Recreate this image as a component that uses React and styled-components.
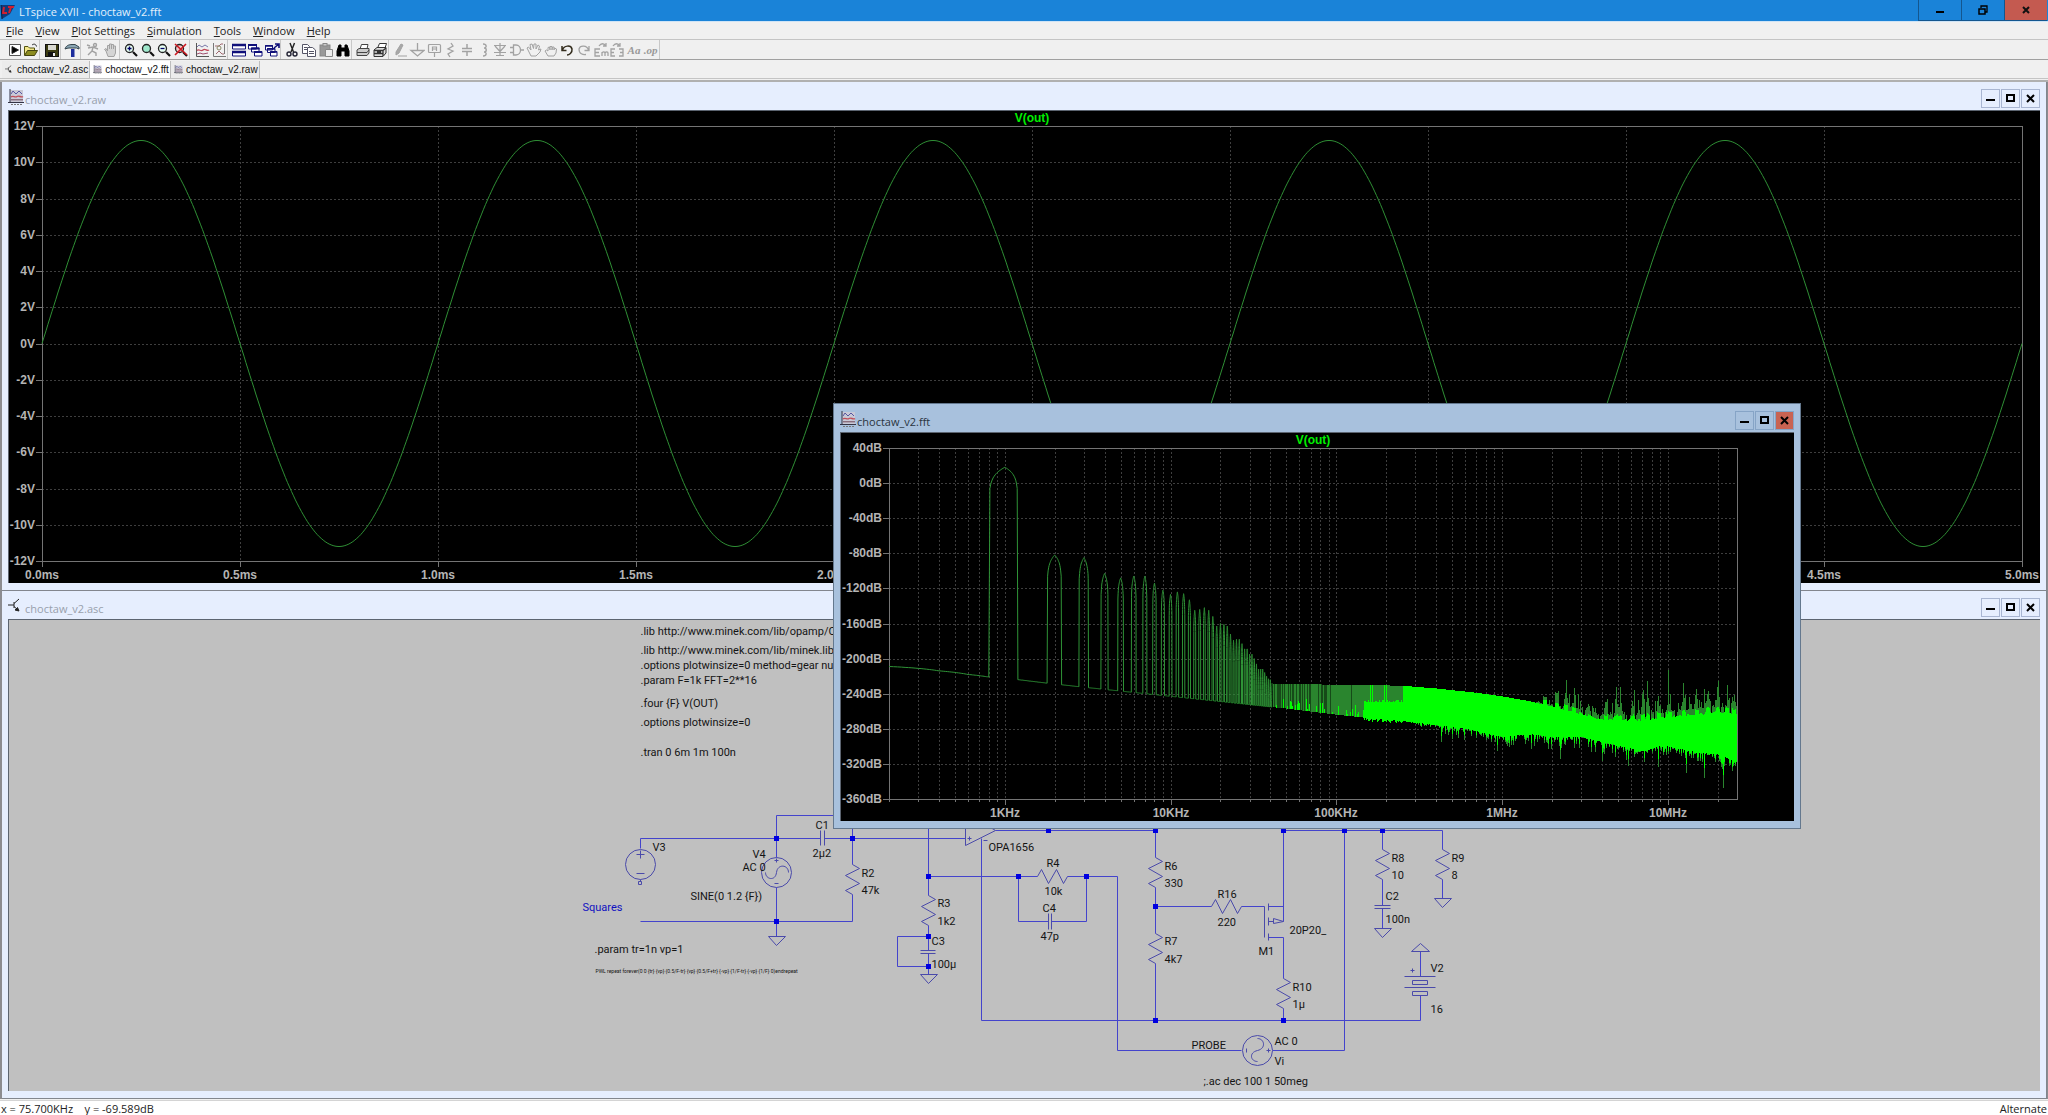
import { useLayoutEffect, useMemo, useRef, useState } from "react";
import styled, { createGlobalStyle } from "styled-components";

const GlobalStyle = createGlobalStyle`
    * {
        box-sizing: border-box;
    }
    body {
        margin: 0;
        overflow: hidden;
        background-color: #f0f0f0;
        font-family: "Open Sans", "Noto Sans", sans-serif;
        font-size: 11px;
        color: #222222;
    }
    button {
        padding: 0;
        border: none;
        background: none;
        font: inherit;
        color: inherit;
    }
`

/* ---------- application frame ---------- */

const Page = styled.div`
    display: flex;
    flex-direction: column;
    height: 100vh;
`

const TitleBar = styled.header`
    display: flex;
    align-items: center;
    height: 21px;
    padding-right: 1px;
    background-color: #1a83d8;
    color: #e4f1fc;
    flex: none;
`

const AppTitle = styled.h1`
    flex: 1;
    margin: 0;
    padding: 3px 0 0 3px;
    font-size: 11px;
    line-height: 18px;
    font-weight: normal;
`

const AppButton = styled.button`
    display: flex;
    align-items: center;
    justify-content: center;
    align-self: stretch;
    width: 43px;
    border-left: 1px solid #14568e;
    border-bottom: 1px solid #14568e;
    background-color: ${props => (props.$close ? "#c45a50" : "transparent")};
`

const MenuBar = styled.nav`
    display: flex;
    gap: 12px;
    height: 19px;
    padding-left: 6px;
    border-top: 1px solid #cfe4f6;
    border-bottom: 1px solid #c4c4c4;
    flex: none;
`

const MenuItem = styled.button`
    line-height: 18px;
    font-size: 11px;
`

const ToolBar = styled.div`
    display: flex;
    height: 20px;
    padding-left: 4px;
    border-bottom: 1px solid #a0a0a0;
    flex: none;
`

const ToolGroup = styled.div`
    display: flex;
    align-items: center;
    justify-content: space-around;
    width: ${props => props.$width}px;
    padding-left: 3px;
    border-right: 1px solid #c8c8c8;
`

const ToolButton = styled.button`
    display: flex;
    width: 16px;
    height: 16px;
    overflow: hidden;
`

const TabStrip = styled.div`
    display: flex;
    height: 19px;
    padding: 1px 0 0 2px;
    border-bottom: 1px solid #c4c4c4;
    flex: none;
`

const Tab = styled.button`
    display: flex;
    align-items: center;
    gap: 3px;
    padding: 0 1px 0 3px;
    font-family: "Liberation Sans", Arial, sans-serif;
    font-size: 10px;
    color: #111111;
    border-right: 1px solid #bdbdbd;
    background-color: ${props => (props.$active ? "#ffffff" : "#ececec")};
`

const StatusBar = styled.footer`
    display: flex;
    justify-content: space-between;
    height: 15px;
    padding: 0 1px;
    border-top: 1px solid #d4d4d4;
    background-color: #ffffff;
    font-size: 11px;
    line-height: 15px;
    white-space: pre;
    flex: none;
`

/* ---------- mdi windows ---------- */

const Desktop = styled.main`
    position: relative;
    display: flex;
    flex-direction: column;
    flex: 1;
    min-height: 0;
    margin: 1px 0;
    padding: 0 1px 0 2px;
    border-top: 2px solid #b0b0b0;
    background-color: #8c8c90;
`

const Window = styled.section`
    display: flex;
    flex-direction: column;
    flex: 1;
    min-height: 0;
    padding: 0 6px 7px;
    border-bottom: 1px solid #82868e;
    border-right: 1px solid #82868e;
    background-color: #e6eefe;
`

const FloatingWindow = styled(Window)`
    position: absolute;
    left: 833px;
    top: 321px;
    width: 968px;
    height: 426px;
    border: 1px solid #64788e;
    background-color: #a8c1dd;
`

const WindowTitle = styled.div`
    display: flex;
    align-items: flex-start;
    gap: 1px;
    height: 28px;
    padding-top: 7px;
    flex: none;
`

const WindowName = styled.h2`
    flex: 1;
    margin: 0;
    font-size: 11px;
    line-height: 21px;
    font-weight: normal;
    color: ${props => (props.$active ? "#2a3440" : "#98a0ac")};
`

const WindowButton = styled.button`
    display: flex;
    align-items: center;
    justify-content: center;
    width: 19px;
    height: 19px;
    border: 1px solid ${props => (props.$active ? "#86a4c6" : "#a9b6d2")};
    background-color: ${props => (props.$alert ? "#c96352" : "transparent")};
`

const Pane = styled.div`
    flex: 1;
    min-height: 0;
    border-top: 1px solid #5c6470;
    border-left: 1px solid #5c6470;
    overflow: hidden;
    background-color: ${props => props.$color};
`

const Canvas = styled.svg`
    display: block;
    width: 100%;
    height: 100%;
`

const AxisLabel = styled.text`
    font-family: "Liberation Sans", Arial, sans-serif;
    font-weight: bold;
    font-size: 12px;
    fill: #b4b4b4;
`

const TraceLabel = styled(AxisLabel)`
    fill: #00f000;
`

/* ---------- icons ---------- */

const Svg = ({ children, size = 16 }) => (
    <svg width={size} height={size} viewBox="0 0 16 16" fill="none" stroke="#222" strokeWidth="1">
        {children}
    </svg>
)

const Lens = ({ fill }) => (
    <>
        <circle cx="6.500" cy="6.500" r="4" fill={fill} stroke="#222" strokeWidth="1.300" />
        <path d="M10 10L14 14" stroke="#111" strokeWidth="2.200" />
    </>
)

const PlotGlyph = ({ size, color = "#c0505a" }) => (
    <Svg size={size}>
        <rect x="2" y="1" width="13" height="12" fill="#c9c9d6" stroke="none" />
        <path d="M2 0V14M0 13.500H16" stroke="#333344" />
        <path d="M3 5L5 2L8 5L11 2L14 5" stroke="#5858a0" />
        <path d="M3 8C5 6 7 9 9 7.500S13 9 15 7.500" stroke={color} strokeWidth="1.400" />
        <path d="M3 10.800H15" stroke="#704858" />
        <path d="M3 15.500H15" stroke="#777" strokeDasharray="2 1" />
    </Svg>
)

const CircuitGlyph = ({ size }) => (
    <Svg size={size}>
        <path d="M0 7H6M6 4V10M6 5.500L11 1M6 8.500L10 12" />
        <path d="M11 13L7 12L9.500 9.500Z" fill="#222" />
    </Svg>
)

const off = "#a2a2a2";

const ToolIcons = {
    Run: <><path d="M2.500 2.500H13.500V13.500H2.500Z" fill="#fff" stroke="#555" /><path d="M5 4.500V11.500L11.500 8Z" fill="#000" /></>,
    Open: <><path d="M1.500 13V4.500H5L6.500 6H11.500V8" fill="#f2e68a" stroke="#555510" /><path d="M1.500 13.500L4.500 8.500H14.500L11.500 13.500Z" fill="#8c8c20" stroke="#444410" /><path d="M9 3C11 1.500 13 2 13.500 4.500" /></>,
    Save: <><rect x="1.500" y="2.500" width="13" height="12" fill="#3c3c12" stroke="#111" /><rect x="4" y="3" width="8" height="5" fill="#d8d8d0" stroke="none" /><rect x="4" y="10" width="7" height="4" fill="#111" stroke="none" /><rect x="9" y="11" width="2" height="3" fill="#eee" stroke="none" /></>,
    "Control Panel": <><path d="M1 7C2 3.500 5 2.500 8 2.500H11L15 5V7L12.500 6H5C3.500 6 2.500 6.500 1 7Z" fill="#8aa6b4" stroke="#34444c" /><rect x="7" y="7" width="3.500" height="8" fill="#1c2c9c" stroke="none" /></>,
    Halt: <g stroke={off} strokeWidth="1.400"><circle cx="10" cy="3" r="1.500" /><path d="M3 6L8 5L13 7M8 5L7 9L11 11V14M7 9L3 13M2 3L5 4" /></g>,
    Pause: <path d="M4 9L2.500 7.500L4 6.500L5.500 9V3.500H7.500V7V2H9.500V7V2.500H11.500V7V4H13.500V11L12 14.500H6Z" fill="#d4d4d4" stroke={off} />,
    "Zoom In": <><Lens fill="#e8fff4" /><path d="M4.500 6.500H8.500M6.500 4.500V8.500" stroke="#006" strokeWidth="1.300" /></>,
    Pan: <Lens fill="#9fe8cc" />,
    "Zoom Out": <><Lens fill="#e8fff4" /><path d="M4.500 6.500H8.500" stroke="#006" strokeWidth="1.300" /></>,
    "Zoom Fit": <><Lens fill="#f4c8c8" /><path d="M2 2L14 13M13 2L2 13" stroke="#cc1820" strokeWidth="1.600" /></>,
    Autorange: <><path d="M2.500 1V14.500H15" stroke="#555" /><path d="M3 5L5 3L8 5L11 3L14 5" stroke="#7878a8" /><path d="M3 8.500C5 6.500 7 10 9 8S13 9.500 15 8" stroke="#c04858" strokeWidth="1.300" /><path d="M3 12L6 11L9 12L14 11" stroke="#a05070" /></>,
    "Mark Points": <><path d="M2.500 1V14.500H15M13.500 2V12" stroke="#777" /><path d="M4 4H8L10 2H12M5 12L8 9L11 12H13" stroke="#a06870" /><circle cx="8" cy="6" r="2" stroke="#886" /></>,
    "Tile Windows": <><path d="M1.500 2.500H14.500V7H1.500ZM1.500 9.500H14.500V14H1.500Z" fill="#fff" stroke="#10107a" /><path d="M1 3H15M1 10H15" stroke="#10107a" strokeWidth="2.400" /></>,
    Cascade: <><path d="M1.500 2.500H9.500V7H1.500ZM4.500 6H12V10H4.500ZM7.500 9.500H15V14H7.500Z" fill="#fff" stroke="#10107a" /><path d="M1 3H10M4 6.500H12.500M7 10H15" stroke="#10107a" strokeWidth="2" /></>,
    "Close Windows": <><path d="M1.500 3.500H8.500V8H1.500ZM3.500 6.500H11V10.500H3.500ZM6.500 9.500H13V14H6.500Z" fill="#fff" stroke="#10107a" /><path d="M1 4H9M3 7H11M6 10H13M10 6L15 2M11 2H15V6" stroke="#10107a" strokeWidth="1.600" /></>,
    Cut: <><path d="M6 1L9.500 10M10.500 1L7 10" strokeWidth="1.400" /><circle cx="5" cy="12" r="2" stroke="#223" strokeWidth="1.400" /><circle cx="11" cy="12" r="2" stroke="#223" strokeWidth="1.400" /></>,
    Copy: <g stroke="#556"><path d="M1.500 2.500H6.500L8.500 4.500V11.500H1.500Z" fill="#fff" /><path d="M6.500 5.500H11.500L14.500 8V14.500H6.500Z" fill="#fff" /><path d="M3 5.500H6M3 7.500H6M8 9.500H13M8 11.500H13" /></g>,
    Paste: <g stroke="#888"><rect x="2" y="3" width="10" height="11" fill="#999" /><rect x="5" y="1.500" width="4" height="2.500" fill="#ccc" /><path d="M7.500 7.500H14.500V14.500H7.500Z" fill="#eee" /></g>,
    Find: <path d="M4 3H6V6H10V3H12L14 9V14H10V9H6V14H2V9Z" fill="#000" stroke="#000" />,
    Print: <g stroke="#444"><path d="M5 7L6.500 2.500H13L12 7" fill="#fff" /><path d="M2 8L4 6.500H14V11L12 13.500H2Z" fill="#ccc" /><path d="M2 10.500H12M12 10.500L14 8" /></g>,
    "Print Setup": <g stroke="#333"><path d="M6 5L7.500 1.500H14.500L13 6" fill="#fff" /><path d="M2 8L5 5.500H14V11L11 14.500H2Z" fill="#ddd" /><path d="M2 8.500H11V14M2 11.500H11M5 10H9M11 8.500L14 6" strokeWidth="1.300" /></g>,
    Wire: <g stroke={off}><path d="M4 10L9 2L11 3L7 11L4 13Z" fill="#a8a8a8" /><path d="M6 14H15" /></g>,
    Ground: <path d="M8.500 1V8M2 8.500H15L8.500 14Z" stroke={off} strokeWidth="1.300" />,
    "Label Net": <g stroke={off} strokeWidth="1.200"><rect x="2.500" y="2.500" width="12" height="8" rx="1" /><path d="M8.500 10V15M6.500 9V5H10.500V9M6.500 7H10.500" /></g>,
    Resistor: <path d="M9 1L11 4L6 7L11 9L6 12L8 15" stroke={off} strokeWidth="1.300" />,
    Capacitor: <path d="M8 2V6.500M8 9.500V14M3 6.500H13M3 9.500H13" stroke={off} strokeWidth="1.500" />,
    Inductor: <path d="M7 2C11 2 11 6 8 6C11 6 11 10 8 10C11 10 11 14 7 14" stroke={off} strokeWidth="1.400" />,
    Diode: <path d="M2 3.500H14M3 4L8 9.500L13 4M2 10.500H14M8 1V14M4 13.500H12" stroke={off} strokeWidth="1.200" />,
    Component: <path d="M1 5.500H4M1 10.500H4M4.500 3V13H7C13 13 13 3 7 3ZM12 8H15" stroke={off} strokeWidth="1.300" />,
    Move: <path d="M5 14L3 10L1 6L2.500 5L5 8L4 2.500L6 2L7.500 6.500L8 2H10L10 7L12 3L13.500 4L12.500 8L15 7L14 10L10 14Z" stroke={off} />,
    Drag: <path d="M5 14L2 9L3.500 8L5 9V5.500L6.500 5L7 8V4.500H9V8L9.500 5H11V8L11.500 6L13.500 7L13 11L11 14Z" stroke={off} />,
    Undo: <path d="M3 4V8.500H7.500M3.500 8C5 3 12 3 13 7C13.500 11 10 13 8 13" stroke="#332c1c" strokeWidth="1.500" />,
    Redo: <path d="M13 4V8.500H8.500M12.500 8C11 3 4 3 3 7C3 12 7 13 10 12.500" stroke={off} strokeWidth="1.300" />,
    Rotate: <g stroke={off} strokeWidth="1.300"><path d="M6 4C8 1 11 1 13 4M13 1V4H10M7 7H2V14H7M2 10.500H6M9 14V10M9 11C10 9.500 12 9.500 12 11V14M12 11C13 9.500 15 9.500 15 11V14" /></g>,
    Mirror: <g stroke={off} strokeWidth="1.300"><path d="M4 4C6 1 9 1 11 4M11 1V4H8M6 7H2V14H6M2 10.500H5M10 7H14V14H10M14 10.500H11" /></g>,
}

const toolGroups = [
    [36, ["Run", "Open"]],
    [21, ["Save"]],
    [20, ["Control Panel"]],
    [39, ["Halt", "Pause"]],
    [70, ["Zoom In", "Pan", "Zoom Out", "Zoom Fit"]],
    [38, ["Autorange", "Mark Points"]],
    [53, ["Tile Windows", "Cascade", "Close Windows"]],
    [71, ["Cut", "Copy", "Paste", "Find"]],
    [37, ["Print", "Print Setup"]],
    [271, ["Wire", "Ground", "Label Net", "Resistor", "Capacitor", "Inductor", "Diode", "Component",
        "Move", "Drag", "Undo", "Redo", "Rotate", "Mirror", "Text", "SPICE Directive"]],
]

const GlyphButton = styled(ToolButton)`
    justify-content: center;
    font-family: "Liberation Serif", serif;
    font-size: 11px;
    font-weight: bold;
    font-style: italic;
    line-height: 16px;
    color: #999999;
`

const textTools = { Text: "Aa", "SPICE Directive": ".op" }

const MinGlyph = () => <svg width="9" height="9"><path d="M0 6H9" stroke="#000" strokeWidth="2" /></svg>
const MaxGlyph = () => <svg width="9" height="9"><rect x="1" y="1" width="7" height="6" fill="none" stroke="#000" strokeWidth="2" /></svg>
const CloseGlyph = () => <svg width="9" height="9"><path d="M1 1L8 8M8 1L1 8" stroke="#000" strokeWidth="2" /></svg>

/* ---------- plots ---------- */

// Tracks the size of the pane so the traces are always drawn at 1:1
const useSize = () => {
    const ref = useRef(null);
    const [size, setSize] = useState({ w: 0, h: 0 });
    useLayoutEffect(() => {
        const measure = () => setSize({ w: ref.current.clientWidth, h: ref.current.clientHeight });
        const observer = new ResizeObserver(measure);
        measure();
        observer.observe(ref.current);
        return () => observer.disconnect();
    }, []);
    return [ref, size];
}

const Frame = ({ left, right, top, bottom, rows, cols }) => {
    const mid = Math.round((left + right) / 2);
    return (
        <>
            <g stroke="#3e3e3e" strokeDasharray="2 2" shapeRendering="crispEdges">
                {rows.slice(1, -1).map(r => <path key={r.label} d={`M${left} ${r.y}H${right}`} />)}
                {cols.map(c => <path key={c.x} d={`M${c.x} ${top}V${bottom}`} />)}
            </g>
            <g stroke="#747474" fill="none" shapeRendering="crispEdges">
                <path d={`M${left} ${top}H${right}V${bottom}H${left}Z`} />
                {rows.map(r => <path key={r.label} d={`M${left - 6} ${r.y}H${left}`} />)}
                {cols.map(c => <path key={c.x} d={`M${c.x} ${bottom}V${bottom + (c.label ? 6 : 3)}`} />)}
            </g>
            {rows.map(r => <AxisLabel key={r.label} x={left - 7} y={r.y + 4} textAnchor="end">{r.label}</AxisLabel>)}
            {cols.filter(c => c.label).map(c => (
                <AxisLabel key={c.label} x={c.x} y={bottom + 18} textAnchor="middle">{c.label}</AxisLabel>
            ))}
            <TraceLabel x={mid} y={top - 4} textAnchor="middle">V(out)</TraceLabel>
        </>
    )
}

const volts = [12, 10, 8, 6, 4, 2, 0, -2, -4, -6, -8, -10, -12];
const times = [0, 0.5, 1, 1.5, 2, 2.5, 3, 3.5, 4, 4.5, 5];

const WaveformPlot = () => {
    const [ref, { w, h }] = useSize();
    const left = 33, top = 15, right = w - 18, bottom = h - 22;
    const xOf = t => left + (t / 5) * (right - left);
    const yOf = v => top + ((12 - v) / 24) * (bottom - top);
    let d = "";
    for (let i = 0; i <= 1000; i++) {
        const t = i / 200;
        d += `${i ? "L" : "M"}${xOf(t).toFixed(1)} ${yOf(11.2 * Math.sin(2 * Math.PI * t)).toFixed(1)}`;
    }
    return (
        <Canvas ref={ref}>
            {w > 0 && (
                <>
                    <Frame
                        left={left} right={right} top={top} bottom={bottom}
                        rows={volts.map(v => ({ y: Math.round(yOf(v)), label: v + "V" }))}
                        cols={times.map(t => ({ x: Math.round(xOf(t)), label: t.toFixed(1) + "ms" }))}
                    />
                    <path d={d} fill="none" stroke="#2f8f35" />
                </>
            )}
        </Canvas>
    )
}

// [frequency in KHz, dB] tables describing the spectrum
const floorDb = [[0.2, -209], [0.3, -211], [0.8, -221], [1.2, -224], [1.8, -228], [2.8, -232], [5, -237], [10, -243],
    [20, -249], [50, -257], [100, -264], [160, -268], [250, -271], [400, -276], [600, -280], [1000, -289],
    [1500, -286], [2200, -290], [3000, -289], [5000, -299], [7200, -306], [8600, -300], [10000, -300],
    [15000, -307], [20000, -309], [26300, -318]];
const crestDb = [[42, -229], [150, -230], [250, -231], [400, -234], [700, -239], [1000, -243], [1500, -249],
    [2000, -255], [3000, -264], [4000, -271], [7000, -271], [10000, -268], [20000, -262], [26300, -265]];
const harmonicDb = [18, -82, -85, -103, -108, -106, -106, -114, -122, -127, -124, -126, -133, -145, -144, -142, -145,
    -152, -163, -160, -161, -163, -172, -179, -178, -178, -183, -189, -189, -195, -195, -200, -206, -212, -212, -212,
    -216, -220, -223, -224, -228];
const peaks = [[1800, -244], [2130, -239], [2430, -224], [2720, -234], [4200, -250], [4850, -232], [5150, -232],
    [6100, -248], [7100, -236], [7550, -226], [8800, -243], [10000, -213], [10300, -240], [12450, -228],
    [14900, -235], [17400, -237], [20000, -226], [22700, -230], [25000, -242]];
const dips = [[430, -295], [500, -292], [940, -305], [1500, -303], [2250, -314], [4000, -317], [5800, -322],
    [8800, -324], [12900, -330], [16500, -336], [21600, -347]];

const lookup = (table, f) => {
    if (f <= table[0][0]) return table[0][1];
    for (let i = 1; i < table.length; i++) {
        const [f1, a] = table[i];
        const [f0, b] = table[i - 1];
        if (f <= f1) return b + ((a - b) * Math.log(f / f0)) / Math.log(f1 / f0);
    }
    return table[table.length - 1][1];
}

const makeRandom = seed => () => {
    seed = (seed * 1664525 + 1013904223) % 4294967296;
    return seed / 4294967296;
}

const buildSpectrum = (xOf, fOf, yOf, right) => {
    // 200Hz bins, magnitude interpolated between them
    const level = n => (n % 5 === 0 ? harmonicDb[n / 5 - 1] : lookup(floorDb, n / 5));
    let line = `M${xOf(0.2)} ${yOf(-209)}`;
    for (let n = 1; n < 205; n++) {
        const a = 10 ** (level(n) / 20);
        const b = 10 ** (level(n + 1) / 20);
        for (let s = 1; s <= 16; s++) {
            const mag = a + ((b - a) * s) / 16;
            line += `L${xOf((n + s / 16) / 5).toFixed(1)} ${yOf(20 * Math.log10(mag)).toFixed(1)}`;
        }
    }

    const random = makeRandom(7);
    let dim = "", faint = "", bright = "";
    for (let x = Math.ceil(xOf(41)); x < right; x++) {
        const f = fOf(x);
        const low = lookup(floorDb, f);
        const high = lookup(crestDb, f);
        const column = (a, b) => `M${x} ${Math.round(yOf(a))}V${Math.round(yOf(b))}`;
        if (f < 250) {
            if (random() < 0.45 + Math.log10(f / 41)) dim += column(high, low);
            else faint += column(high, low);
            if (f > 147) bright += column(random() < 0.1 ? high : -247 - random() * 3, low - random() * 4);
            else if (random() < 0.35) bright += column(low + 2 + random() * 12, low);
            continue;
        }
        const wild = Math.min(1, Math.max(0, Math.log10(f / 1500) * 3));
        let spike = random() ** 3 * 22 * wild + (random() < 0.6 ? 7 * wild : 0);
        let dip = random() ** 3 * (f < 400 ? 5 : 15);
        const peak = peaks.find(([p]) => Math.abs(xOf(p) - x) <= 0.5);
        const hole = dips.find(([p]) => Math.abs(xOf(p) - x) <= 0.5);
        const near = peaks.some(([p]) => Math.abs(xOf(p) - x) <= 2);
        if (peak) spike = peak[1] - high;
        else if (near) spike += 8;
        if (hole) dip = low - hole[1];
        dim += column(high + spike, high) + column(low, low - dip);
        bright += column(high + random() * 3 * wild + (near ? 5 : 0), low - dip * 0.6);
    }
    return { line, dim, faint, bright };
}

const decades = [[1, "1KHz"], [10, "10KHz"], [100, "100KHz"], [1000, "1MHz"], [10000, "10MHz"]];
const levels = [40, 0, -40, -80, -120, -160, -200, -240, -280, -320, -360];

const SpectrumPlot = () => {
    const [ref, { w, h }] = useSize();
    const left = 48, top = 15, right = w - 57, bottom = h - 22;
    const fMax = 26214.4;
    const decade = (right - left) / Math.log10(fMax / 0.2);
    const xOf = f => left + decade * Math.log10(f / 0.2);
    const fOf = x => 0.2 * 10 ** ((x - left) / decade);
    const yOf = db => top + ((40 - db) / 400) * (bottom - top);

    const spectrum = useMemo(() => (w ? buildSpectrum(xOf, fOf, yOf, right) : null), [w, h]);

    const cols = [];
    for (let d = 0.1; d < fMax; d *= 10) {
        for (let m = 1; m < 10; m++) {
            const f = d * m;
            if (f < 0.19 || f > fMax) continue;
            const named = decades.find(([v]) => Math.abs(v / f - 1) < 0.01);
            cols.push({ x: Math.round(xOf(f)), label: named && named[1] });
        }
    }

    return (
        <Canvas ref={ref}>
            {spectrum && (
                <>
                    <Frame
                        left={left} right={right} top={top} bottom={bottom} cols={cols}
                        rows={levels.map(v => ({ y: Math.round(yOf(v)), label: v + "dB" }))}
                    />
                    <g fill="none">
                        <path d={spectrum.line} stroke="#2f9437" />
                        <path d={spectrum.faint} stroke="#164a18" shapeRendering="crispEdges" />
                        <path d={spectrum.dim} stroke="#2a852e" shapeRendering="crispEdges" />
                        <path d={spectrum.bright} stroke="#00ff00" shapeRendering="crispEdges" />
                    </g>
                </>
            )}
        </Canvas>
    )
}

/* ---------- schematic ---------- */

const Note = styled.text`
    font-family: Roboto, "Open Sans", sans-serif;
    font-size: ${props => props.$size || 11}px;
    fill: ${props => props.$color || "#141414"};
    white-space: pre;
`

const wires = [
    "M640 848V838H820M824 838H965", "M776 857V815H840", "M852 820V864M852 894V921H640", "M776 887V936",
    "M928 820V895M928 925V950M928 953V974M928 936H897V966H928", "M928 876H1037M1067 876H1117V1050H1241",
    "M1018 876V921H1048M1051 921H1086V876", "M981 838V1020H1420V995", "M995 830H1155V857M1155 887V933M1155 963V1020",
    "M1155 906H1211M1241 906H1264", "M1283 921V830H1442V849", "M1268 906H1283M1268 937H1283V978M1283 1008V1020",
    "M1272 1050H1344V830", "M1382 830V849M1382 879V905M1382 908V928", "M1442 879V898", "M1420 951V976",
]

const parts = [
    "M820 830V845M824 830V845", "M920 950H935M920 953H935", "M1048 913V929M1051 913V929", "M1374 905H1390M1374 908H1390",
    "M1264 906V937M1268 903V910M1268 917V925M1268 933V940M1268 921H1273M1273 918L1283 921L1273 923Z",
    "M1404 976H1435M1404 987H1435M1412 980H1427V984H1412ZM1412 991H1427V995H1412Z", "M1410 970H1414M1412 968V972",
    "M965 820V845L995 830L990 827M967 838H971M969 836V840M983 840H987",
    "M636 854H644M640 850V858M636 873H644M640 879V881M638 881H641V884H638Z",
    "M774 860H778M776 858V862M774 883H778M765 872C765 879 775 881 776 872S788 864 788 872",
    "M1246 1048V1052M1266 1050H1270M1268 1048V1052M1257 1038C1264 1038 1266 1048 1257 1050S1250 1061 1257 1061",
]

const junctions = [[776, 838], [852, 838], [776, 921], [928, 876], [1018, 876], [928, 936], [928, 966], [1048, 830],
    [1155, 830], [1283, 830], [1344, 830], [1382, 830], [1086, 876], [1155, 906], [1155, 1020], [1283, 1020]];
const resistors = [[852, 864], [928, 895], [1155, 857], [1155, 933], [1283, 978], [1382, 849], [1442, 849]];
const flatResistors = [[1037, 876], [1211, 906]];
const grounds = [[776, 936], [928, 974], [1382, 928], [1442, 898]];
const sources = [[640, 864], [776, 872], [1257, 1050]];

const notes = [
    [640, 634, ".lib http://www.minek.com/lib/opamp/OP"],
    [640, 653, ".lib http://www.minek.com/lib/minek.lib"],
    [640, 668, ".options plotwinsize=0 method=gear num"],
    [640, 683, ".param F=1k FFT=2**16"],
    [640, 706, ".four {F} V(OUT)"],
    [640, 725, ".options plotwinsize=0"],
    [640, 755, ".tran 0 6m 1m 100n"],
    [652, 850, "V3"], [752, 857, "V4"], [742, 870, "AC 0"], [815, 828, "C1"], [812, 856, "2µ2"],
    [690, 899, "SINE(0 1.2 {F})"], [594, 952, ".param tr=1n vp=1"], [861, 876, "R2"], [861, 893, "47k"],
    [937, 906, "R3"], [937, 924, "1k2"], [931, 944, "C3"], [931, 967, "100µ"], [988, 850, "OPA1656"],
    [1046, 866, "R4"], [1044, 894, "10k"], [1042, 911, "C4"], [1040, 939, "47p"], [1164, 869, "R6"],
    [1164, 886, "330"], [1164, 944, "R7"], [1164, 962, "4k7"], [1217, 897, "R16"], [1217, 925, "220"],
    [1258, 954, "M1"], [1289, 933, "20P20_"], [1292, 990, "R10"], [1292, 1007, "1µ"], [1391, 861, "R8"],
    [1391, 878, "10"], [1385, 899, "C2"], [1385, 922, "100n"], [1451, 861, "R9"], [1451, 878, "8"],
    [1430, 971, "V2"], [1430, 1012, "16"], [1191, 1048, "PROBE"], [1274, 1044, "AC 0"], [1274, 1064, "Vi"],
    [1203, 1084, ";.ac dec 100 1 50meg"],
]

const Schematic = () => (
    <Canvas>
        <g transform="translate(-8.500 -619.500)">
            <g fill="none" stroke="#4444cc">{wires.map(d => <path key={d} d={d} />)}</g>
            <g fill="none" stroke="#4a4aaa">
                {parts.map(d => <path key={d} d={d} />)}
                {resistors.map(([x, y]) => <path key={x + "," + y} d={`M${x} ${y}l7 4l-14 7l14 8l-14 7l7 4`} />)}
                {flatResistors.map(([x, y]) => <path key={x} d={`M${x} ${y}l4 -7l7 14l8 -14l7 14l4 -7`} />)}
                {grounds.map(([x, y]) => <path key={x} d={`M${x - 8} ${y}h17l-9 9z`} />)}
                <path d="M1411 951H1429L1420 943Z" />
                {sources.map(([x, y]) => <circle key={x} cx={x} cy={y} r="15" />)}
            </g>
            <g fill="#0000e0">
                {junctions.map(([x, y]) => <rect key={x + "," + y} x={x - 2.5} y={y - 2.5} width="5" height="5" />)}
            </g>
            {notes.map(([x, y, text]) => <Note key={x + "," + y} x={x} y={y}>{text}</Note>)}
            <Note x={582} y={910} $color="#1010c0">Squares</Note>
            <Note x={595} y={972} $size={5}>
                {"PWL repeat forever(0 0 {tr} {vp} {0.5/F-tr} {vp} {0.5/F+tr} {-vp} {1/F-tr} {-vp} {1/F} 0)endrepeat"}
            </Note>
        </g>
    </Canvas>
)

/* ---------- app ---------- */

const WindowHead = ({ icon, name, active }) => (
    <WindowTitle>
        {icon}
        <WindowName $active={active}>{name}</WindowName>
        <WindowButton $active={active} aria-label="Minimize"><MinGlyph /></WindowButton>
        <WindowButton $active={active} aria-label="Maximize"><MaxGlyph /></WindowButton>
        <WindowButton $active={active} $alert={active} aria-label="Close"><CloseGlyph /></WindowButton>
    </WindowTitle>
)

const menus = ["File", "View", "Plot Settings", "Simulation", "Tools", "Window", "Help"];

const App = () => {
    return (
        <Page>
            <GlobalStyle />
            <TitleBar>
                <svg width="16" height="18" viewBox="0 0 16 18">
                    <path d="M1 3H15L10 12L2 17Z" fill="#123a78" />
                    <path d="M4 5L3 11H7M8 5H14M11 5L9 11" stroke="#d02030" strokeWidth="2" fill="none" />
                    <path d="M1 3L2 17" stroke="#0a1c3c" />
                </svg>
                <AppTitle>LTspice XVII - choctaw_v2.fft</AppTitle>
                <AppButton aria-label="Minimize">
                    <svg width="10" height="10"><path d="M1 7H9" stroke="#000" strokeWidth="2" /></svg>
                </AppButton>
                <AppButton aria-label="Restore">
                    <svg width="10" height="10" fill="none" stroke="#000">
                        <path d="M1 4H7V9H1Z" strokeWidth="1.500" /><path d="M3 3V1H9V7H7" strokeWidth="1.300" />
                    </svg>
                </AppButton>
                <AppButton $close aria-label="Close">
                    <svg width="8" height="8"><path d="M1 1L7 7M7 1L1 7" stroke="#111" strokeWidth="2" /></svg>
                </AppButton>
            </TitleBar>
            <MenuBar>
                {menus.map(m => <MenuItem key={m}><u>{m[0]}</u>{m.slice(1)}</MenuItem>)}
            </MenuBar>
            <ToolBar>
                {toolGroups.map(([width, tools]) => (
                    <ToolGroup key={tools[0]} $width={width}>
                        {tools.map(t => textTools[t]
                            ? <GlyphButton key={t}>{textTools[t]}</GlyphButton>
                            : <ToolButton key={t} aria-label={t}><Svg>{ToolIcons[t]}</Svg></ToolButton>)}
                    </ToolGroup>
                ))}
            </ToolBar>
            <TabStrip>
                <Tab><CircuitGlyph size={9} />choctaw_v2.asc</Tab>
                <Tab $active><PlotGlyph size={9} color="#806070" />choctaw_v2.fft</Tab>
                <Tab><PlotGlyph size={9} color="#806070" />choctaw_v2.raw</Tab>
            </TabStrip>
            <Desktop>
                <Window>
                    <WindowHead icon={<PlotGlyph size={16} />} name="choctaw_v2.raw" />
                    <Pane $color="#000000"><WaveformPlot /></Pane>
                </Window>
                <Window>
                    <WindowHead icon={<CircuitGlyph size={16} />} name="choctaw_v2.asc" />
                    <Pane $color="#c0c0c0"><Schematic /></Pane>
                </Window>
                <FloatingWindow>
                    <WindowHead icon={<PlotGlyph size={16} />} name="choctaw_v2.fft" active />
                    <Pane $color="#000000"><SpectrumPlot /></Pane>
                </FloatingWindow>
            </Desktop>
            <StatusBar>
                <span>{"x = 75.700KHz    y = -69.589dB"}</span>
                <span>Alternate</span>
            </StatusBar>
        </Page>
    )
}

export default App
